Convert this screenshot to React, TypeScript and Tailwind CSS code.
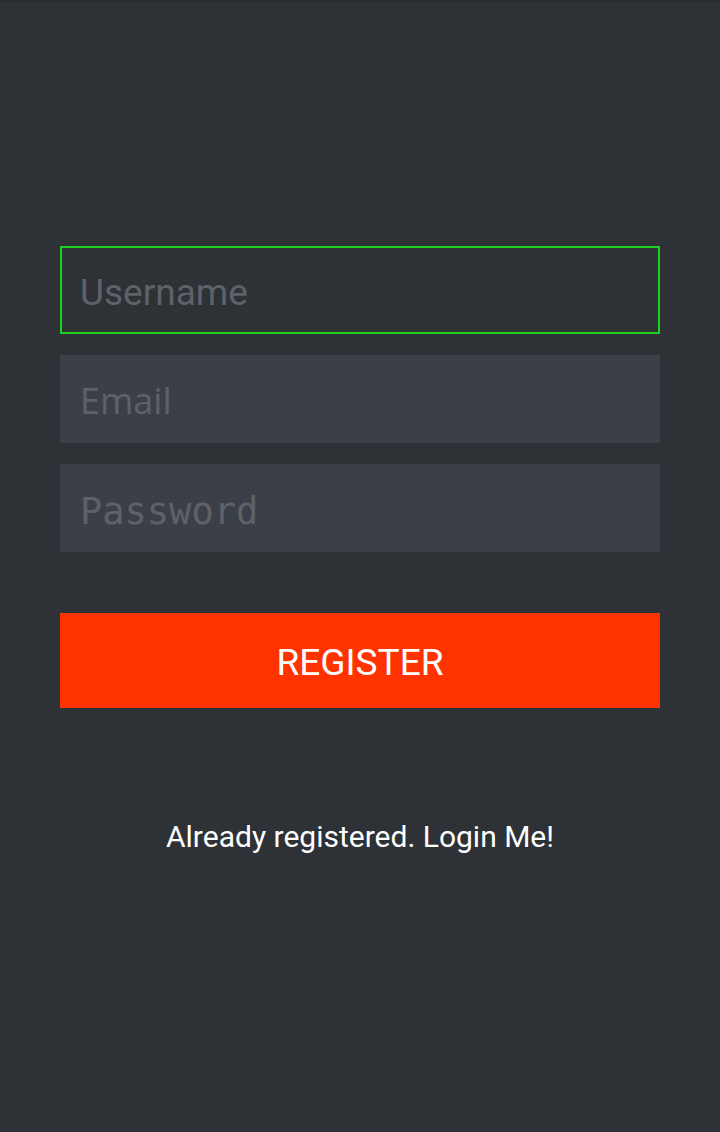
import React from "react";

export default function App() {
  return (
    <div className="min-h-[1132px] w-[720px] bg-[#2e3136] flex flex-col">
      <div className="h-[4px] bg-gradient-to-b from-[#26292d] to-[#2e3136]" />
      <div className="px-[60px] pt-[242px] flex flex-col">
        <div className="h-[88px] border-2 border-[#1fd11f] flex items-center pl-[18px] pt-[5px]">
          <span className="text-[37px] text-[#5e6268] leading-none" style={{ fontFamily: "Roboto, sans-serif" }}>Username</span>
        </div>
        <div className="mt-[21px] h-[88px] bg-[#3b4048] flex items-center pl-[20px] pt-[4px]">
          <span className="text-[36px] text-[#5e6268] leading-none" style={{ fontFamily: "'Open Sans', sans-serif" }}>Email</span>
        </div>
        <div className="mt-[21px] h-[88px] bg-[#3b4048] flex items-center pl-[20px] pt-[6px]">
          <span className="text-[37px] text-[#5e6268] leading-none" style={{ fontFamily: "'DejaVu Sans Mono', monospace" }}>Password</span>
        </div>
        <button className="mt-[61px] h-[95px] bg-[#ff3300] flex items-center justify-center text-white text-[37px] leading-none pt-[4px]" style={{ fontFamily: "Roboto, sans-serif" }}>
          REGISTER
        </button>
        <div className="mt-[114px] text-center text-white text-[30px] leading-none" style={{ fontFamily: "Roboto, sans-serif" }}>
          Already registered. Login Me!
        </div>
      </div>
    </div>
  );
}
